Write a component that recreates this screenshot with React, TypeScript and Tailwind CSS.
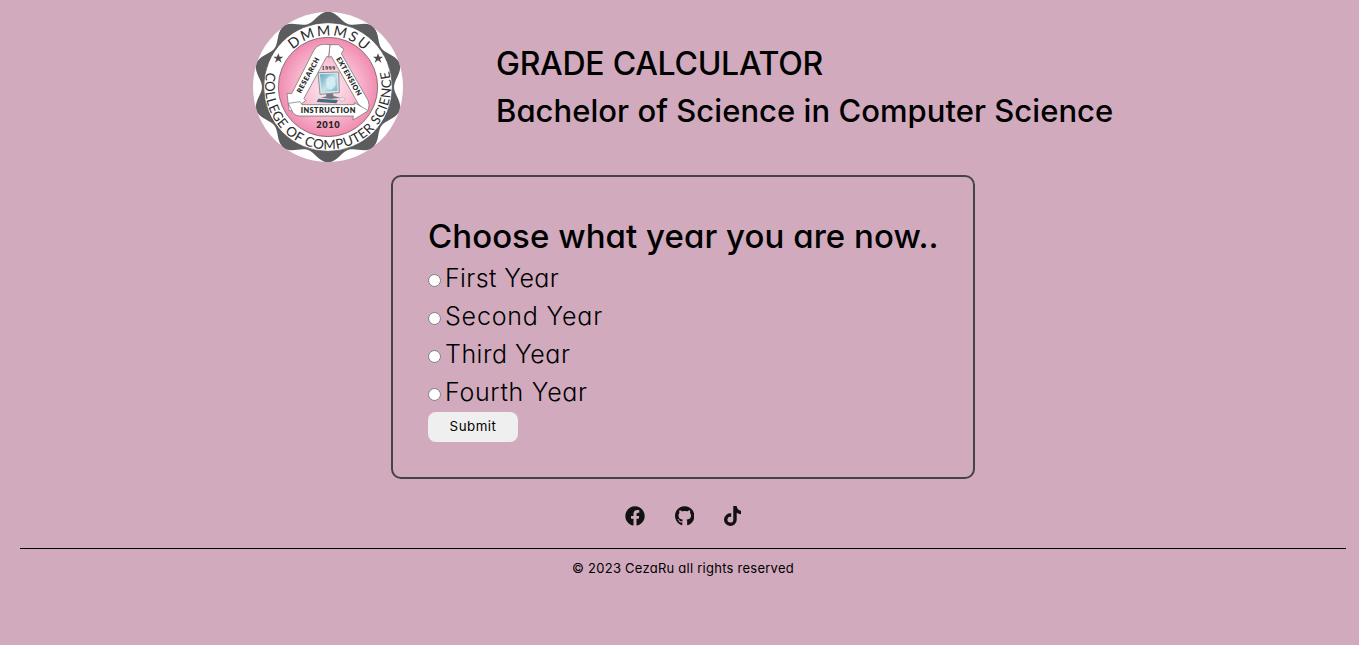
import { FaFacebook, FaGithub, FaTiktok } from "react-icons/fa";

const years = [
  { name: "First Year", tracking: "tracking-[0.4px]" },
  { name: "Second Year", tracking: "tracking-[0.8px]" },
  { name: "Third Year", tracking: "tracking-[0.5px]" },
  { name: "Fourth Year", tracking: "tracking-[0.7px]" },
];

// Ten-lobed rosette behind the lettered ring.
function scallop() {
  const pts: string[] = [];
  for (let i = 0; i <= 360; i += 2) {
    const a = (i * Math.PI) / 180;
    const r = Math.min(225, 212 + 14 * Math.cos(10 * a));
    pts.push((240 + r * Math.sin(a)).toFixed(1) + " " + (243 - r * Math.cos(a)).toFixed(1));
  }
  return "M" + pts.join("L") + "Z";
}

function Seal() {
  return (
    <svg viewBox="15 18 450 450" className="size-[150px] shrink-0">
      <defs>
        <radialGradient id="pink">
          <stop offset="0" stopColor="#fdeaf1" />
          <stop offset="0.5" stopColor="#f9c3d5" />
          <stop offset="1" stopColor="#f18bb0" />
        </radialGradient>
        <linearGradient id="screen" x1="0" y1="0" x2="1" y2="1">
          <stop offset="0" stopColor="#5fa9bd" />
          <stop offset="0.55" stopColor="#c4e2ec" />
          <stop offset="1" stopColor="#73b4c6" />
        </linearGradient>
        <path id="arcTop" d="M86 243A154 154 0 0 1 394 243" />
        <path id="arcBottom" d="M57 194A189 189 0 1 0 423 194" />
      </defs>
      <circle cx="240" cy="243" r="225" fill="#fff" />
      <path d={scallop()} fill="#5c5c5e" />
      <circle cx="240" cy="243" r="193" fill="#fff" stroke="#444" strokeWidth="2" />
      <circle cx="240" cy="243" r="149" fill="url(#pink)" stroke="#555" strokeWidth="2" />
      <g fill="#2b2b2b" fontFamily="Lato, sans-serif">
        <text fontSize="43" textAnchor="middle" letterSpacing="6">
          <textPath href="#arcTop" startOffset="51%">DMMMSU</textPath>
        </text>
        <text fontSize="40" textLength="684" lengthAdjust="spacing">
          <textPath href="#arcBottom" startOffset="4">COLLEGE OF COMPUTER SCIENCE</textPath>
        </text>
      </g>
      <path d="M91 142l4 10h11l-9 7 4 11-10-7-10 7 4-11-9-7h11zM390 142l4 10h11l-9 7 4 11-10-7-10 7 4-11-9-7h11z" fill="#4a4a4c" />
      <g fill="#fff" stroke="#666" strokeWidth="2">
        <path d="M246 116h26l4 5 12 8-8 14L360 283q6 14 1 28l-7 8-24-27-80-141-8 3z" />
        <path d="M117 262l14 1L197 134q10-19 33-19l16 1-4 35-6 1-68 125 5 7-12 9q-23 4-33 22l-5-2z" />
        <path d="M121 292l9 18q6 20 26 20h160l-1 12 46-28-42-24v6H162l-6-9z" />
      </g>
      <g fill="#262626" fontFamily="Lato, sans-serif" fontWeight="800">
        <text x="158" y="320" fontSize="22" textLength="164">INSTRUCTION</text>
        <text fontSize="21" textLength="118" transform="translate(158 263) rotate(-61)">RESEARCH</text>
        <text fontSize="21" textLength="130" transform="translate(264 158) rotate(60)">EXTENSION</text>
        <text x="205" y="367" fontSize="28" textLength="70">2010</text>
        <text x="221" y="193" fontSize="17" textLength="40" fontFamily="Liberation Serif, serif">1999</text>
      </g>
      <path d="M210 200l62-2 2 62-58 5z" fill="#d9e4e8" stroke="#8a9297" strokeWidth="3" />
      <path d="M216 205l51-2 1 51-47 4z" fill="url(#screen)" />
      <path d="M235 220q14-18 25-3l3 21-12 13-12-3-5-14z" fill="#dceff5" opacity=".8" />
      <path d="M234 264l20-2 3 8 20 5-28 4-30-4 16-4z" fill="#737b80" />
      <path d="M211 278l59 4-5 10-59-4z" fill="#426e7f" />
      <ellipse cx="283" cy="280" rx="8" ry="5" fill="#eee" stroke="#777" />
    </svg>
  );
}

export default function App() {
  return (
    <div className="min-h-screen bg-[#d1aabd] font-[Inter,sans-serif] text-black [font-feature-settings:'cv11']">
      <header className="flex h-[175px] pt-3 pl-[253px]">
        <Seal />
        <div className="ml-[93px] pt-7 font-medium whitespace-nowrap">
          <h1 className="h-12 w-fit text-[32px] leading-[48px] tracking-[-0.27px]">GRADE CALCULATOR</h1>
          <h2 className="h-12 w-fit text-[31px] leading-[46px] tracking-[0.04px]">Bachelor of Science in Computer Science</h2>
        </div>
      </header>
      <main className="ml-[391px] h-[304px] w-[584px] rounded-[10px] border-2 border-[#444] pt-[35px] pl-[35px]">
        <h2 className="h-12 w-fit text-[33px] leading-[48px] font-medium tracking-[0.05px] whitespace-nowrap">Choose what year you are now..</h2>
        <form>
          {years.map(({ name, tracking }) => (
            <label key={name} className="flex h-[38px] w-fit items-start text-[25px] leading-9 font-light">
              <input type="radio" name="year" className="mt-[14px] mr-1 size-[13px]" />
              <span className={tracking}>{name}</span>
            </label>
          ))}
          <button type="button" className="block h-[30px] w-[90px] rounded-lg bg-[#efefef] text-[13.3px] tracking-[0.5px]">Submit</button>
        </form>
      </main>
      <footer className="ml-5 w-[1326px]">
        <div className="flex h-[70px] justify-center gap-[30px] border-b border-black pt-[27px] text-[#111]">
          <FaFacebook className="h-5 w-5" />
          <FaGithub className="h-5 w-[19.4px]" />
          <FaTiktok className="h-5 w-[17.5px]" />
        </div>
        <p className="pt-[9px] text-center text-[13px] leading-5 tracking-[0.25px]">© 2023 CezaRu all rights reserved</p>
      </footer>
    </div>
  );
}
